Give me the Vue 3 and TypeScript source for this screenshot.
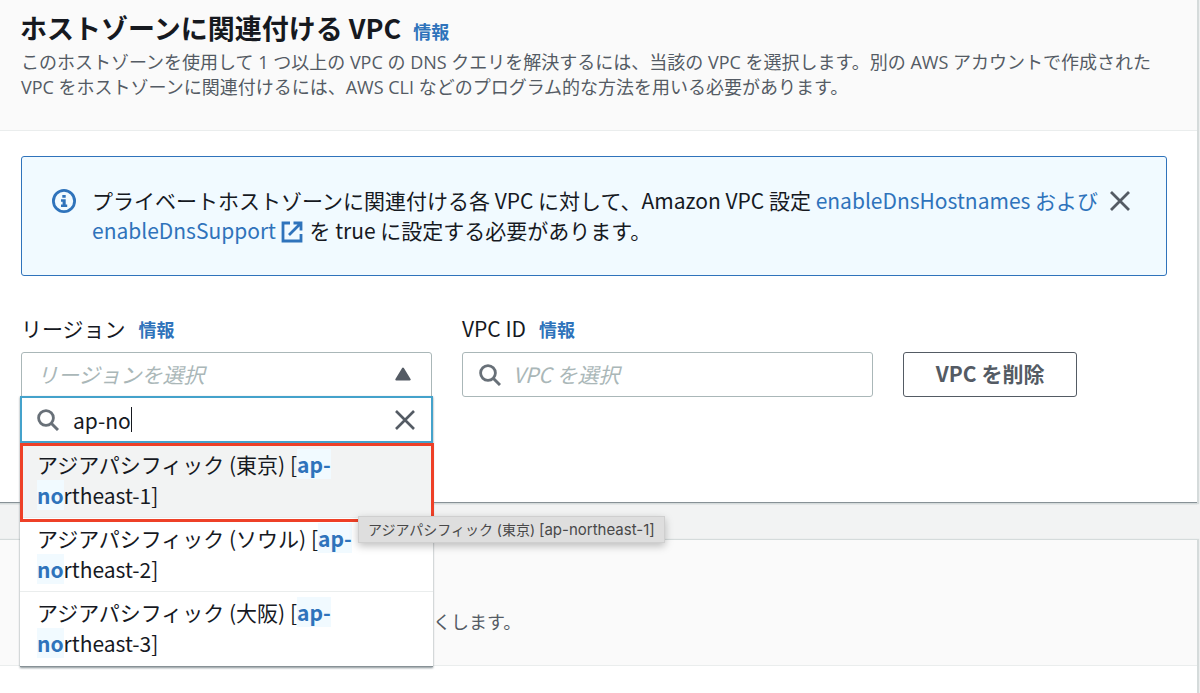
<script setup lang="ts">
import { ref } from 'vue'

interface RegionOption {
  name: string
  match: [string, string]
  rest: string
}

const query = ref<string>('ap-no')
const vpcId = ref<string>('')
const activeIndex = ref<number>(0)

const options: RegionOption[] = [
  { name: '東京', match: ['ap-', 'no'], rest: 'rtheast-1' },
  { name: 'ソウル', match: ['ap-', 'no'], rest: 'rtheast-2' },
  { name: '大阪', match: ['ap-', 'no'], rest: 'rtheast-3' },
]
</script>

<template>
  <main class="page">
    <section class="panel">
      <header class="panel-header">
        <div class="title-row">
          <h2 class="title">ホストゾーンに関連付ける VPC</h2>
          <a class="info" href="#">情報</a>
        </div>
        <p class="description">
          このホストゾーンを使用して 1 つ以上の VPC の DNS クエリを解決するには、当該の VPC を選択します。別の AWS アカウントで作成された<br />VPC をホストゾーンに関連付けるには、AWS CLI などのプログラム的な方法を用いる必要があります。
        </p>
      </header>

      <div class="panel-body">
        <div class="alert" role="status">
          <svg class="alert-icon" viewBox="0 0 24 24" aria-hidden="true">
            <circle cx="12" cy="12" r="10.6" fill="none" stroke="currentColor" stroke-width="2.8" />
            <path d="M10.3 6h3.4v2.8h-3.4zM9 10.2h4.7v5.3H15.2V18H9v-2.5h1.6v-2.8H9z" fill="currentColor" />
          </svg>
          <p class="alert-text">
            プライベートホストゾーンに関連付ける各 VPC に対して、Amazon VPC 設定
            <a href="#">enableDnsHostnames および<br />enableDnsSupport
              <svg class="external" viewBox="0 0 22 22" aria-hidden="true">
                <path d="M9 2H2v18h18v-7M12.5 2H20v7.5M20 2 8 14" fill="none" stroke="currentColor" stroke-width="2.8" />
              </svg></a>
            を true に設定する必要があります。
          </p>
          <button class="icon-button" type="button" aria-label="閉じる">
            <svg class="cross" viewBox="0 0 20 20" aria-hidden="true">
              <path d="M1 1l18 18M19 1L1 19" fill="none" stroke="currentColor" stroke-width="2.8" />
            </svg>
          </button>
        </div>

        <div class="fields">
          <div class="field">
            <div class="label-row">
              <label for="region">リージョン</label>
              <a class="info" href="#">情報</a>
            </div>
            <div class="select">
              <button id="region" class="control trigger" type="button" aria-haspopup="listbox" aria-expanded="true">
                <span>リージョンを選択</span>
                <svg class="caret-up" viewBox="0 0 16 14" aria-hidden="true">
                  <path d="M8 1.5 14.7 12.5H1.3z" fill="currentColor" stroke="currentColor" stroke-width="2" stroke-linejoin="round" />
                </svg>
              </button>
              <div class="dropdown">
                <div class="search">
                  <svg class="glass" viewBox="0 0 22 22" aria-hidden="true">
                    <circle cx="9" cy="9" r="7.4" fill="none" stroke="currentColor" stroke-width="2.8" />
                    <path d="M14.2 14.2 21 21" stroke="currentColor" stroke-width="3" />
                  </svg>
                  <input v-model="query" class="query" type="text" aria-label="リージョンを検索" />
                  <span class="text-cursor"></span>
                  <button class="icon-button clear" type="button" aria-label="クリア" @click="query = ''">
                    <svg class="cross" viewBox="0 0 20 20" aria-hidden="true">
                      <path d="M1 1l18 18M19 1L1 19" fill="none" stroke="currentColor" stroke-width="2.6" />
                    </svg>
                  </button>
                </div>
                <ul class="options" role="listbox" aria-label="リージョン">
                  <li
                    v-for="(option, index) in options"
                    :key="option.name"
                    class="option"
                    :class="{ active: index === activeIndex }"
                    role="option"
                    :aria-selected="index === activeIndex"
                    @mouseenter="activeIndex = index"
                  >
                    アジアパシフィック ({{ option.name }}) [<mark>{{ option.match[0] }}</mark><br /><mark>{{ option.match[1] }}</mark>{{ option.rest }}]
                  </li>
                </ul>
                <div class="tooltip" role="tooltip">アジアパシフィック (東京) <span class="code">[ap-northeast-1]</span></div>
              </div>
            </div>
          </div>

          <div class="field">
            <div class="label-row">
              <label for="vpc">VPC ID</label>
              <a class="info" href="#">情報</a>
            </div>
            <div class="control vpc-box">
              <svg class="glass" viewBox="0 0 22 22" aria-hidden="true">
                <circle cx="9" cy="9" r="7.4" fill="none" stroke="currentColor" stroke-width="2.8" />
                <path d="M14.2 14.2 21 21" stroke="currentColor" stroke-width="3" />
              </svg>
              <input id="vpc" v-model="vpcId" class="vpc-input" type="text" placeholder="VPC を選択" />
            </div>
          </div>

          <div class="field action">
            <button class="remove" type="button">VPC を削除</button>
          </div>
        </div>
      </div>
    </section>

    <section class="panel next">
      <header class="next-header">
        <p class="next-text">くします。</p>
      </header>
    </section>
  </main>
</template>

<style>
body {
  background: #f2f3f3;
}
</style>

<style scoped>
.page {
  box-sizing: border-box;
  height: 100vh;
  overflow: hidden;
  padding-right: 3px;
  display: flex;
  flex-direction: column;
  gap: 37px;
  background: #f2f3f3;
  color: #16191f;
  font-family: "Noto Sans CJK JP", "Noto Sans", sans-serif;
  font-size: 21px;
  line-height: 30px;
}

.page * {
  box-sizing: border-box;
}

h2,
p,
ul {
  margin: 0;
  padding: 0;
}

button,
input {
  font: inherit;
  color: inherit;
}

a {
  color: #2f73bb;
  text-decoration: none;
}

.panel {
  background: #fff;
  border-bottom: 1px solid #879196;
  box-shadow: 1px 0 1px 1px #d5dbdb, 0 1px 1px #b4bcbe;
}

.panel-header {
  padding: 8px 20px 30px;
  background: #fafafa;
  border-bottom: 1px solid #eaeded;
}

.title-row {
  display: flex;
  align-items: baseline;
  gap: 12px;
}

.title {
  font-size: 27px;
  line-height: 40px;
  font-weight: 700;
}

.info {
  font-size: 18px;
  font-weight: 700;
}

.description {
  padding: 2px 0 0 1px;
  font-family: "Open Sans", "Noto Sans CJK JP", sans-serif;
  font-size: 18px;
  line-height: 25px;
  color: #545b64;
  white-space: nowrap;
}

.panel-body {
  padding: 25px 30px 105px 21px;
}

.alert {
  display: flex;
  align-items: flex-start;
  padding: 28px 36px 30px 30px;
  border: 1px solid #2f73bb;
  border-radius: 3px;
  background: #f1faff;
}

.alert-icon {
  width: 24px;
  height: 24px;
  margin: 4px 16px 0 0;
  flex: none;
  overflow: visible;
  color: #2f73bb;
}

.alert-text {
  flex: 1;
  white-space: nowrap;
}

.external {
  width: 22px;
  height: 22px;
  margin-right: 2px;
  vertical-align: -4px;
}

.icon-button {
  display: flex;
  padding: 0;
  border: 0;
  background: none;
  color: #545b64;
  cursor: pointer;
}

.alert .icon-button {
  margin-top: 6px;
}

.cross {
  width: 20px;
  height: 20px;
}

.fields {
  display: grid;
  grid-template-columns: 14fr 14fr 9fr;
  column-gap: 30px;
  margin-top: 37px;
}

.label-row {
  display: flex;
  align-items: baseline;
  gap: 13px;
  height: 30px;
  margin-bottom: 9px;
}

.control {
  width: 100%;
  height: 45px;
  display: flex;
  align-items: center;
  border: 1px solid #aab7b8;
  border-radius: 3px;
  background: #fff;
}

.select {
  position: relative;
}

.trigger {
  justify-content: space-between;
  padding: 0 20px 2px 15px;
  color: #aab7b8;
  font-style: italic;
  border-radius: 3px 3px 0 0;
}

.caret-up {
  width: 16px;
  height: 14px;
  color: #545b64;
}

.dropdown {
  position: absolute;
  top: 44px;
  left: -1px;
  right: -1px;
  z-index: 2;
  background: #fff;
  border-bottom: 1px solid #879196;
  box-shadow: 0 1px 2px #879196;
}

.search {
  display: flex;
  align-items: center;
  height: 47px;
  padding: 0 16px 0 15px;
  border: 2px solid #44a2cb;
}

.glass {
  width: 22px;
  height: 22px;
  flex: none;
  color: #687078;
}

.query {
  field-sizing: content;
  margin-left: 14px;
  padding: 0;
  border: 0;
  outline: 0;
  background: none;
}

.text-cursor {
  width: 1px;
  height: 25px;
  background: #16191f;
}

.clear {
  margin-left: auto;
}

.options {
  padding-bottom: 1px;
  list-style: none;
}

.option {
  padding: 5px 17px 6px;
  border-top: 1px solid #eaeded;
  line-height: 31px;
}

.option.active {
  position: relative;
  background: #f2f3f3;
}

/* Highlight frame drawn over the neighbouring rows */
.option.active::after {
  content: "";
  position: absolute;
  inset: -1px -1px -5px 0;
  border: 3px solid #ee4027;
}

mark {
  background: #f1faff;
  color: #2f73bb;
  font-weight: 700;
}

.tooltip {
  position: absolute;
  top: 120px;
  left: 338px;
  padding: 0 9px;
  border: 1px solid #cfcfcf;
  background: #dedede;
  box-shadow: 0 3px 8px rgba(0, 0, 0, 0.25);
  color: #484848;
  font-family: Inter, "Noto Sans CJK JP", sans-serif;
  font-size: 14px;
  line-height: 25px;
  white-space: nowrap;
}

.code {
  font-size: 15px;
}

.vpc-box {
  padding: 0 16px;
}

.vpc-input {
  flex: 1;
  min-width: 0;
  margin-left: 12px;
  padding: 0 0 2px;
  border: 0;
  outline: 0;
  background: none;
}

.vpc-input::placeholder {
  color: #aab7b8;
  font-style: italic;
  opacity: 1;
}

.action {
  padding-top: 39px;
}

.remove {
  height: 45px;
  padding: 0 32px 3px;
  border: 1px solid #545b64;
  border-radius: 3px;
  background: #fff;
  color: #545b64;
  font-weight: 700;
  cursor: pointer;
}

.next {
  flex: 1;
  border-bottom: 0;
}

.next-header {
  padding: 66px 20px 29px 433px;
  background: #fafafa;
  border-bottom: 1px solid #eaeded;
}

.next-text {
  font-size: 18px;
  color: #545b64;
}
</style>
